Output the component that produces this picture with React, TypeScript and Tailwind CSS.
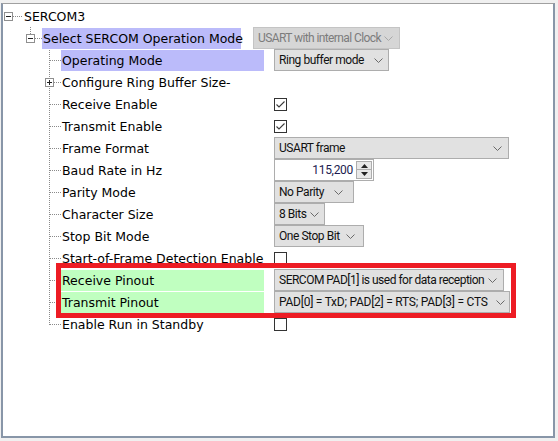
import React from 'react';

type Row = {
  label: string;
  level: 0 | 1 | 2;
  toggle?: 'minus' | 'plus';
  hl?: 'blue' | 'green';
  value?: React.ReactNode;
};

const LABEL_FONT = { fontFamily: '"DejaVu Sans", Verdana, sans-serif' };
const CTRL_FONT = { fontFamily: 'Roboto, "Liberation Sans", Arial, sans-serif' };

function Chevron({ color = '#606060' }: { color?: string }) {
  return (
    <svg width="9" height="5" viewBox="0 0 9 5" className="ml-[3px] shrink-0">
      <polyline points="0.5,0.5 4.5,4.5 8.5,0.5" fill="none" stroke={color} strokeWidth="1" />
    </svg>
  );
}

function Dropdown({
  text,
  w,
  disabled,
  tight = 'tracking-[-0.45px]',
  pr = 'pr-[6px]',
}: {
  text: string;
  w: string;
  disabled?: boolean;
  tight?: string;
  pr?: string;
}) {
  return (
    <div
      className={`flex h-[22px] shrink-0 items-center justify-between border pl-[4px] text-[12px] leading-none ${pr} ${w} ${
        disabled ? 'border-[#c4c4c4] bg-[#d6d6d6] text-[#7c7c7c]' : 'border-[#adadad] bg-[#e1e1e1] text-[#111]'
      }`}
      style={CTRL_FONT}
    >
      <span className={`whitespace-nowrap ${tight}`}>{text}</span>
      <Chevron color={disabled ? '#a8a8a8' : '#6a6a6a'} />
    </div>
  );
}

function Check({ on }: { on?: boolean }) {
  return (
    <div className="mt-[1px] flex h-[13px] w-[13px] items-center justify-center border border-[#333] bg-white">
      {on && (
        <svg width="9" height="7" viewBox="0 0 9 7">
          <polyline points="0.5,3.5 3,6 8.5,0.5" fill="none" stroke="#3a3a3a" strokeWidth="1.1" />
        </svg>
      )}
    </div>
  );
}

function Spinner({ value }: { value: string }) {
  return (
    <div className="flex h-[22px] w-[100px] items-center border border-[#adadad] bg-white" style={CTRL_FONT}>
      <span className="flex-1 pr-[3px] text-right text-[12px] leading-none tracking-[-0.3px] text-[#1c1c50]">
        {value}
      </span>
      <div className="mr-[1px] flex w-[16px] flex-col">
        <div className="flex h-[9px] items-center justify-center border border-[#adadad] bg-[#e8e8e8]">
          <svg width="7" height="4" viewBox="0 0 7 4">
            <polygon points="0,4 3.5,0 7,4" fill="#222" />
          </svg>
        </div>
        <div className="flex h-[9px] items-center justify-center border border-t-0 border-[#adadad] bg-[#e8e8e8]">
          <svg width="7" height="4" viewBox="0 0 7 4">
            <polygon points="0,0 3.5,4 7,0" fill="#222" />
          </svg>
        </div>
      </div>
    </div>
  );
}

function Toggle({ kind }: { kind: 'minus' | 'plus' }) {
  return (
    <div className="relative h-[9px] w-[9px] border border-[#8f8f8f] bg-white">
      <div className="absolute left-[1px] top-[3px] h-[1px] w-[5px] bg-[#222]" />
      {kind === 'plus' && <div className="absolute left-[3px] top-[1px] h-[5px] w-[1px] bg-[#222]" />}
    </div>
  );
}

const rows: Row[] = [
  { label: 'SERCOM3', level: 0, toggle: 'minus' },
  {
    label: 'Select SERCOM Operation Mode',
    level: 1,
    toggle: 'minus',
    hl: 'blue',
    value: <Dropdown text="USART with internal Clock" w="w-[147px]" disabled tight="tracking-[-0.6px]" />,
  },
  {
    label: 'Operating Mode',
    level: 2,
    hl: 'blue',
    value: <Dropdown text="Ring buffer mode" w="w-[115px]" pr="pr-[5px]" />,
  },
  { label: 'Configure Ring Buffer Size-', level: 2, toggle: 'plus' },
  { label: 'Receive Enable', level: 2, value: <Check on /> },
  { label: 'Transmit Enable', level: 2, value: <Check on /> },
  { label: 'Frame Format', level: 2, value: <Dropdown text="USART frame" w="w-[235px]" /> },
  { label: 'Baud Rate in Hz', level: 2, value: <Spinner value="115,200" /> },
  { label: 'Parity Mode', level: 2, value: <Dropdown text="No Parity" w="w-[80px]" pr="pr-[10px]" /> },
  { label: 'Character Size', level: 2, value: <Dropdown text="8 Bits" w="w-[51px]" pr="pr-[8px]" /> },
  { label: 'Stop Bit Mode', level: 2, value: <Dropdown text="One Stop Bit" w="w-[90px]" pr="pr-[8px]" /> },
  { label: 'Start-of-Frame Detection Enable', level: 2, value: <Check /> },
  {
    label: 'Receive Pinout',
    level: 2,
    hl: 'green',
    value: <Dropdown text="SERCOM PAD[1] is used for data reception" w="w-[230px]" tight="tracking-[-0.5px]" />,
  },
  {
    label: 'Transmit Pinout',
    level: 2,
    hl: 'green',
    value: (
      <Dropdown
        text="PAD[0]  = TxD; PAD[2]  = RTS; PAD[3]  = CTS"
        w="w-[236px]"
        tight="tracking-[-0.25px]"
        pr="pr-[4px]"
      />
    ),
  },
  { label: 'Enable Run in Standby', level: 2, value: <Check /> },
];

// Tree connector drawing (dotted lines), sits over the rows.
function TreeLines() {
  const dash = { stroke: '#8a8a8a', strokeWidth: 1, strokeDasharray: '1 1', fill: 'none' } as const;
  const childYs = [56, 78, 100, 122, 144, 166, 188, 210, 232, 254, 276, 298, 320];
  return (
    <svg className="pointer-events-none absolute left-0 top-0" width="80" height="340">
      <line x1="10" y1="12.5" x2="20" y2="12.5" {...dash} />
      <line x1="27.5" y1="23" x2="27.5" y2="30" {...dash} />
      <line x1="32" y1="34.5" x2="39" y2="34.5" {...dash} />
      <line x1="46.5" y1="44" x2="46.5" y2="321" {...dash} />
      {childYs.map((y) => (
        <line key={y} x1={y === 78 ? 51 : 47} y1={y + 0.5} x2="58" y2={y + 0.5} {...dash} />
      ))}
    </svg>
  );
}

export default function App() {
  return (
    <div className="h-[441px] w-[558px] bg-[#f0f0f0] pt-[3px]">
      <div className="relative ml-[1px] h-[435px] w-[554px] border-b-2 border-l-2 border-r-2 border-t border-b-[#8896a8] border-l-[#8896a8] border-r-[#8896a8] border-t-[#a0a0a0] bg-white">
        <div className="relative pt-[1px]">
          <TreeLines />
          {rows.map((r) => {
            const labelBox =
              r.level === 0 ? 'ml-[20px] w-[254px]' : r.level === 1 ? 'ml-[39px] w-[211px]' : 'ml-[58px] w-[213px]';
            const hlClass = r.hl === 'blue' ? 'bg-[#bbbbfa]' : r.hl === 'green' ? 'bg-[#c0ffc0]' : '';
            const hlW = r.level === 1 ? 'w-[199px]' : r.level === 2 ? 'w-[203px]' : '';
            const togglePos = r.level === 0 ? 'left-[1px]' : r.level === 1 ? 'left-[23px]' : 'left-[42px]';
            return (
              <div key={r.label} className="relative flex h-[22px] items-center">
                {r.toggle && (
                  <div className={`absolute top-[7px] ${togglePos}`}>
                    <Toggle kind={r.toggle} />
                  </div>
                )}
                <div className={`flex h-full shrink-0 items-center ${labelBox}`}>
                  <div
                    className={`flex h-[21px] items-center whitespace-nowrap pl-[1px] pt-[2px] text-[12.5px] text-black ${
                      r.hl ? `${hlClass} ${hlW}` : ''
                    }`}
                    style={LABEL_FONT}
                  >
                    {r.label}
                  </div>
                </div>
                <div className="flex items-center">{r.value}</div>
              </div>
            );
          })}
        </div>
        {/* red annotation frame */}
        <div className="pointer-events-none absolute left-[53px] top-[259px] h-[55px] w-[460px] border-[5px] border-[#ed1c24]" />
      </div>
    </div>
  );
}
